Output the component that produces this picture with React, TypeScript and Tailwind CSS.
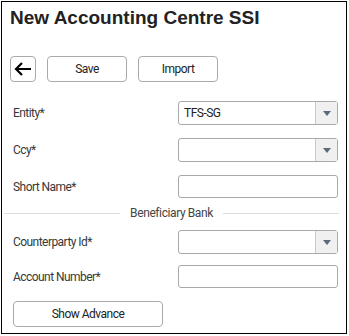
import React from "react";

// Small chevron used on the right of every dropdown
function Caret() {
  return (
    <svg width="8" height="5" viewBox="0 0 8 5" className="text-[#5a6a7a]">
      <path d="M0 0 H8 L4 5 Z" fill="currentColor" />
    </svg>
  );
}

function Select({ value }: { value?: string }) {
  return (
    <div className="flex h-[24px] w-[160px] items-stretch rounded-[3px] border border-[#a9a9a9] bg-white">
      <div className="flex flex-1 items-center px-[5px] text-[12px] tracking-[-0.5px] text-[#222]">{value}</div>
      <div className="flex w-[22px] items-center justify-center border-l border-[#c8c8c8] bg-[#f0f0f0]">
        <Caret />
      </div>
    </div>
  );
}

function TextInput() {
  return <div className="h-[23px] w-[160px] rounded-[3px] border border-[#a9a9a9] bg-white" />;
}

function Row({ label, children }: { label: string; children: React.ReactNode }) {
  return (
    <div className="flex items-center justify-between pl-[11px] pr-[8px]">
      <span className="text-[12px] tracking-[-0.55px] text-[#383838]">{label}</span>
      {children}
    </div>
  );
}

export default function App() {
  return (
    <div className="h-[336px] w-[349px] bg-white p-[1px] font-['Roboto',sans-serif]">
      <div className="flex h-[333px] w-[346px] flex-col border border-black">
        {/* Header */}
        <h1 className="pl-[8px] pt-[4px] font-['Liberation_Sans',Arial,sans-serif] text-[19px] font-bold leading-[24px] text-[#222]">
          New Accounting Centre SSI
        </h1>

        {/* Toolbar */}
        <div className="mt-[26px] flex items-center gap-[11px] pl-[8px]">
          <button className="flex h-[26px] w-[26px] items-center justify-center rounded-[4px] border border-[#aaa] bg-white">
            <svg width="18" height="14" viewBox="0 0 18 14">
              <path d="M17 7 H2 M8 1 L2 7 L8 13" stroke="#000" strokeWidth="2.2" fill="none" />
            </svg>
          </button>
          <button className="h-[26px] w-[80px] rounded-[4px] border border-[#aaa] bg-white text-[12px] tracking-[-0.5px] text-[#222]">Save</button>
          <button className="h-[26px] w-[80px] rounded-[4px] border border-[#aaa] bg-white text-[12px] tracking-[-0.5px] text-[#222]">Import</button>
        </div>

        {/* Main fields */}
        <div className="mt-[19px] flex flex-col gap-[13px]">
          <Row label="Entity*">
            <Select value="TFS-SG" />
          </Row>
          <Row label="Ccy*">
            <Select />
          </Row>
          <Row label="Short Name*">
            <TextInput />
          </Row>
        </div>

        {/* Section divider */}
        <div className="mt-[6px] flex items-center gap-[10px] pl-[2px] pr-[7px]">
          <div className="h-px flex-1 bg-[#ddd]" />
          <span className="text-[12px] tracking-[-0.4px] text-[#444]">Beneficiary Bank</span>
          <div className="h-px flex-1 bg-[#ddd]" />
        </div>

        <div className="mt-[8px] flex flex-col gap-[11px]">
          <Row label="Counterparty Id*">
            <Select />
          </Row>
          <Row label="Account Number*">
            <TextInput />
          </Row>
        </div>

        <div className="mt-[13px] pl-[11px]">
          <button className="h-[26px] w-[150px] rounded-[4px] border border-[#aaa] bg-white text-[12px] tracking-[-0.5px] text-[#222]">
            Show Advance
          </button>
        </div>
      </div>
    </div>
  );
}
